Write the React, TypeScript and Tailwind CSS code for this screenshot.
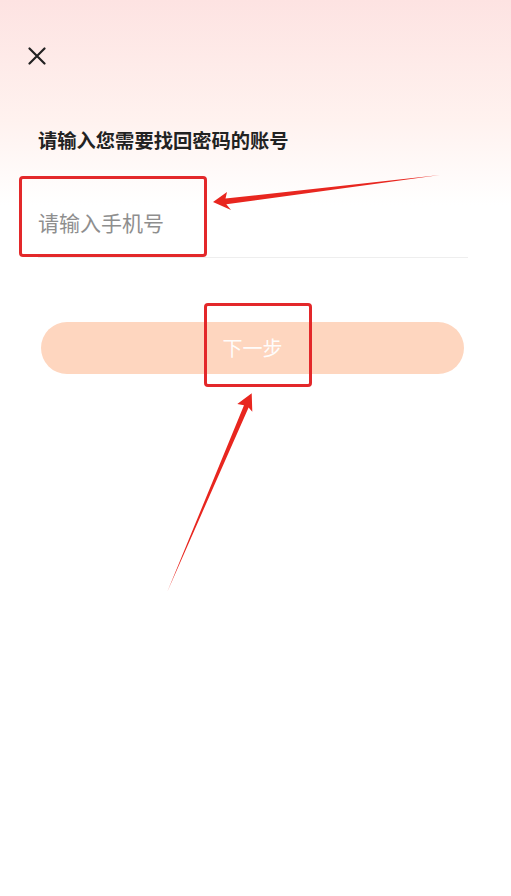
import { useState } from "react"

export default function App() {
  const [phone, setPhone] = useState("")

  return (
    <div className="relative min-h-[896px] w-full overflow-hidden bg-white bg-[linear-gradient(180deg,#fde3e2_0px,#fff2ef_120px,#ffffff_205px)] font-['Noto_Sans_CJK_SC','Noto_Sans',sans-serif]">
      {/* Close */}
      <div className="pl-[28px] pt-[47px]">
        <button aria-label="关闭" className="block h-[18px] w-[18px]">
          <svg viewBox="0 0 18 18" className="h-[18px] w-[18px]" fill="none" stroke="#222222" strokeWidth="2.2" strokeLinecap="round">
            <path d="M1.5 1.5 16.5 16.5M16.5 1.5 1.5 16.5" />
          </svg>
        </button>
      </div>

      <div className="pl-[38px] pr-[43px]">
        <h1 className="mt-[63px] text-[19.3px] font-bold leading-[24px] text-[#222222]">请输入您需要找回密码的账号</h1>

        <div className="mt-[34px] flex h-[72px] items-center border-b border-[#eeeeee]">
          <input
            value={phone}
            onChange={(e) => setPhone(e.target.value)}
            placeholder="请输入手机号"
            className="w-full bg-transparent text-[21px] leading-[28px] text-[#222222] outline-none placeholder:text-[#8e8e8e]"
          />
        </div>
      </div>

      <div className="ml-[41px] mr-[47px] mt-[64px]">
        <button className="flex h-[52px] w-full items-center justify-center rounded-full bg-[#fed6bf] text-[20px] text-white/95">
          下一步
        </button>
      </div>

      {/* Annotation boxes */}
      <div className="pointer-events-none absolute left-[19px] top-[176px] h-[81px] w-[188px] rounded-[4px] border-[3px] border-[#e3282a]" />
      <div className="pointer-events-none absolute left-[204px] top-[303px] h-[84px] w-[108px] rounded-[4px] border-[3px] border-[#e3282a]" />

      {/* Annotation arrows */}
      <svg className="pointer-events-none absolute left-0 top-0 h-[896px] w-[511px]" viewBox="0 0 511 896">
        <polygon fill="#e8261f" points="213,202 227,192 225.5,198.6 440,175 226.3,204.2 231,210" />
        <polygon fill="#e8261f" points="251.7,393.3 237.3,404 244,405.3 167.3,591.7 248.6,407.4 252.3,411.7" />
      </svg>
    </div>
  )
}
